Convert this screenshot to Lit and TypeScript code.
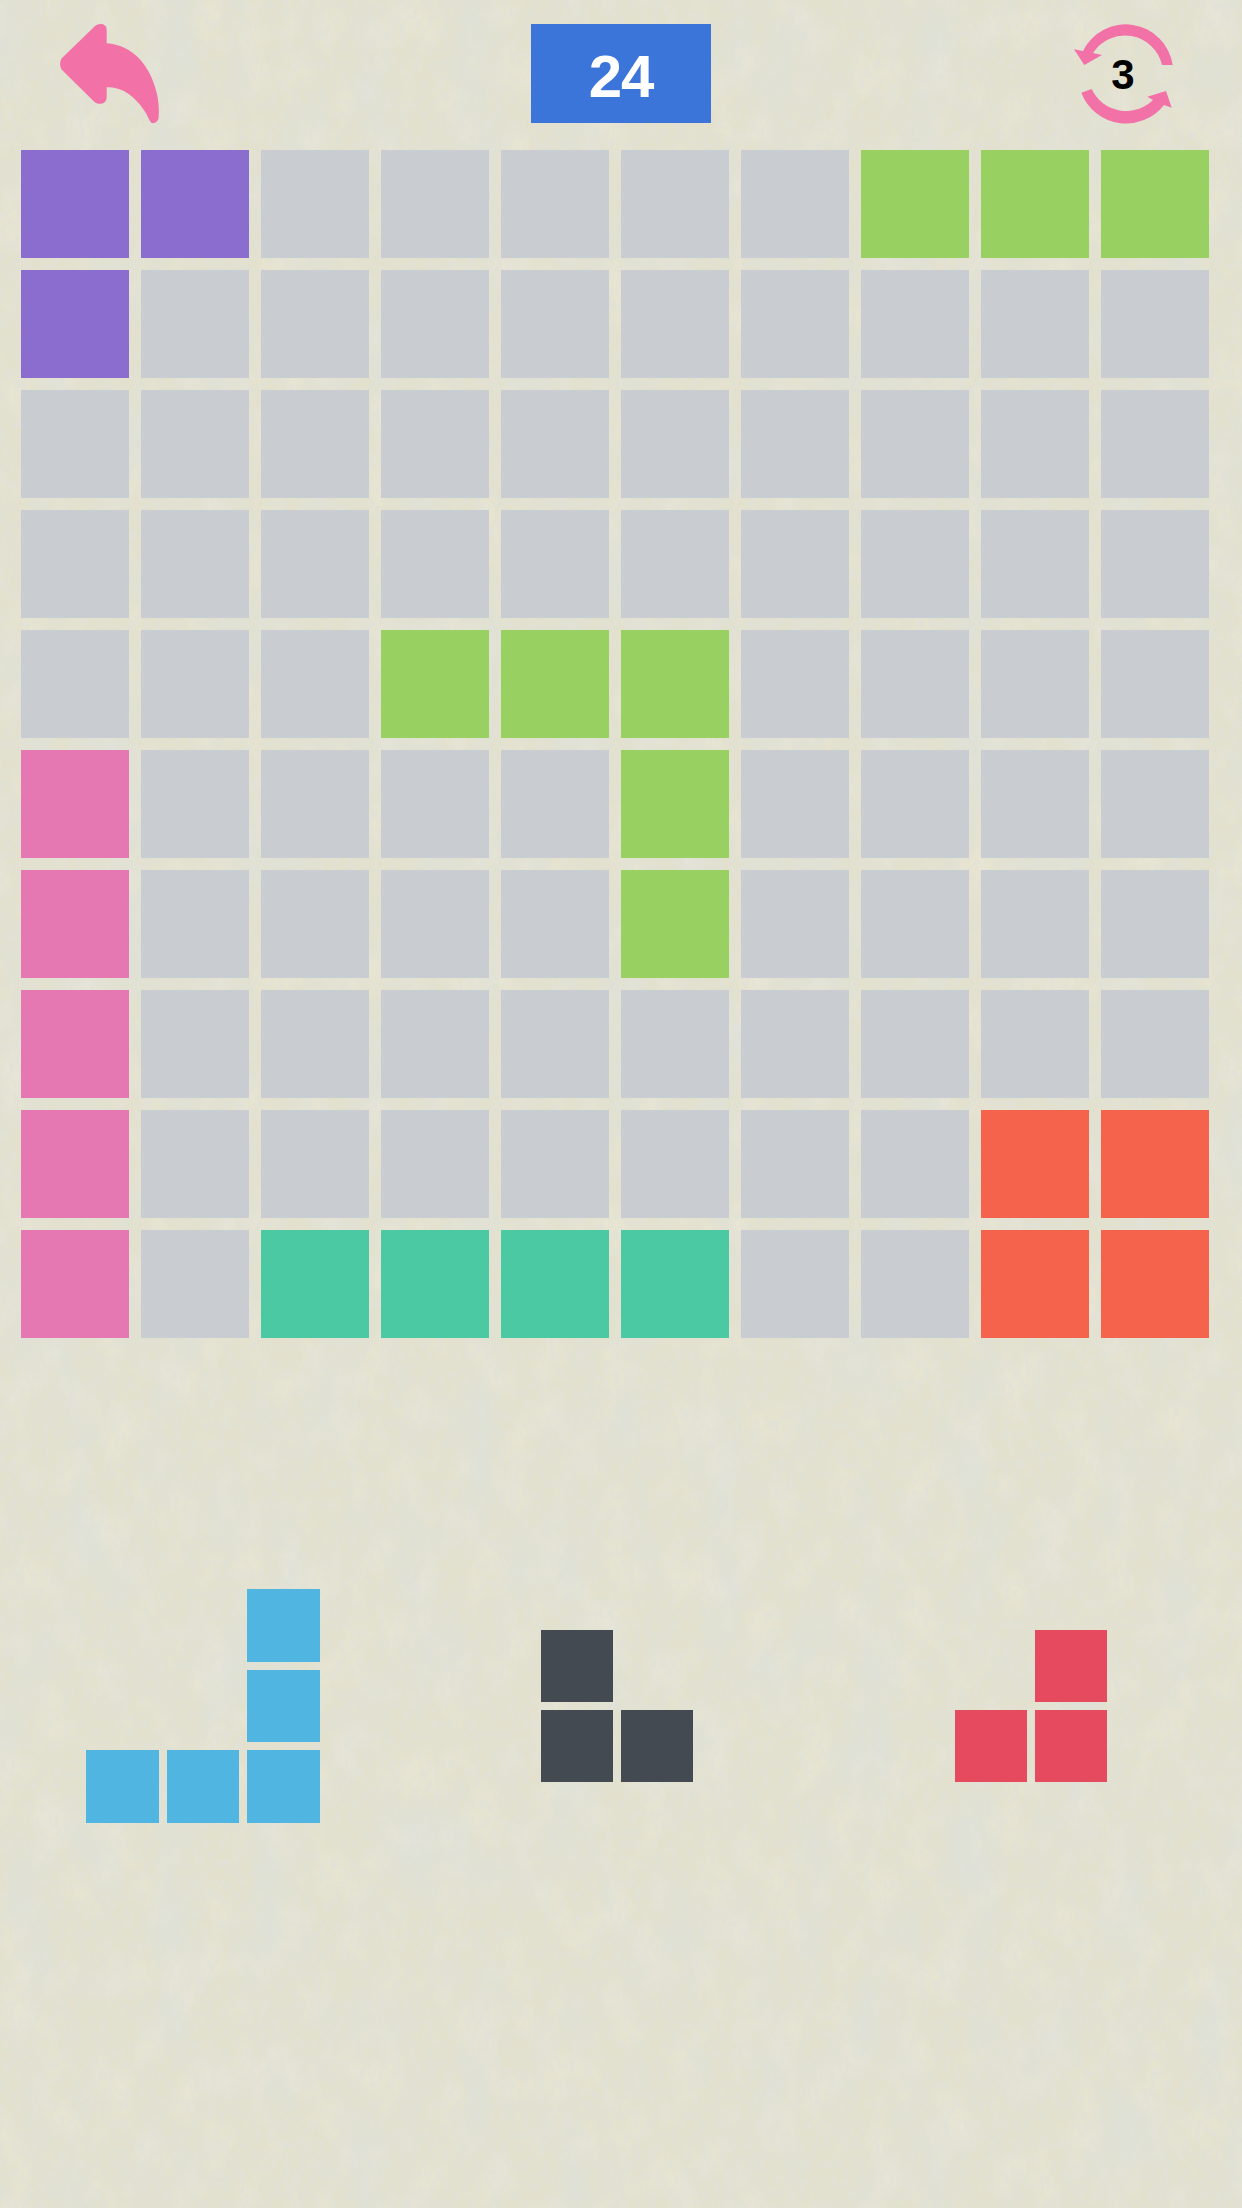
import { LitElement, html, css, svg } from "lit";
import { customElement } from "lit/decorators.js";

const C: Record<string, string> = {
  e: "#c9ccd0", p: "#8b6dcf", g: "#98d162", k: "#e577b3", t: "#4bc9a2", o: "#f5634c",
};
const BOARD = [
  "ppeeeeeggg",
  "peeeeeeeee",
  "eeeeeeeeee",
  "eeeeeeeeee",
  "eeegggeeee",
  "keeeegeeee",
  "keeeegeeee",
  "keeeeeeeee",
  "keeeeeeeoo",
  "kettttzzoo".replace(/z/g, "e"),
];
const PIECES: { color: string; rows: string[]; cls: string }[] = [
  { color: "#50b5e1", rows: ["..x", "..x", "xxx"], cls: "big" },
  { color: "#434a52", rows: ["x.", "xx"], cls: "" },
  { color: "#e54a5f", rows: [".x", "xx"], cls: "" },
];

@customElement("app-root")
export class AppRoot extends LitElement {
  static styles = css`
    :host { display: block; width: 1242px; height: 2208px; position: relative; overflow: hidden; background: #e3e1cd; }
    .paper { position: absolute; inset: 0; width: 100%; height: 100%; }
    .page { position: relative; display: flex; flex-direction: column; height: 100%; }
    .top { flex: none; height: 150px; display: grid; grid-template-columns: 1fr 180px 1fr; box-sizing: border-box; padding-top: 24px; align-items: start; }
    .back { width: 100px; height: 100px; margin-left: 60px; display: block; }
    .score { height: 99px; box-sizing: border-box; padding-top: 5px; background: #3c75d9; color: #fff; display: flex; align-items: center; justify-content: center;
      font: 700 60px "Liberation Sans", Arial, sans-serif; letter-spacing: -1px; }
    .undo { justify-self: end; position: relative; width: 100px; height: 100px; box-sizing: border-box; padding: 2px 2px 0 0; margin-right: 68px; display: flex; align-items: center; justify-content: center;
      font: 700 42px "Liberation Sans", Arial, sans-serif; color: #000; }
    .undo svg { position: absolute; inset: 0; width: 100px; height: 100px; }
    .board { flex: none; display: grid; grid-template-columns: repeat(10, 108px); grid-auto-rows: 108px; gap: 12px; padding-left: 21px; }
    .tray { flex: 1; margin-left: -4px; display: grid; grid-template-columns: repeat(3, 414px); align-items: start; justify-items: center; }
    .piece { display: grid; gap: 8px; grid-auto-rows: 72px; margin-top: 292px; }
    .piece.big { grid-auto-rows: 72.67px; margin-top: 251px; }
  `;

  render() {
    return html`
      <svg class="paper" xmlns="http://www.w3.org/2000/svg" preserveAspectRatio="none" aria-hidden="true">
        <filter id="blot" x="0" y="0" width="100%" height="100%">
          <feTurbulence type="fractalNoise" baseFrequency="0.02 0.01" numOctaves="4" seed="4" />
          <feColorMatrix values="0 0 0 0 0.70  0 0 0 0 0.76  0 0 0 0 0.78  2.6 0 0 0 -1.1" />
        </filter>
        <filter id="warm" x="0" y="0" width="100%" height="100%">
          <feTurbulence type="fractalNoise" baseFrequency="0.03 0.02" numOctaves="3" seed="21" />
          <feColorMatrix values="0 0 0 0 0.95  0 0 0 0 0.87  0 0 0 0 0.78  2.2 0 0 0 -1.05" />
        </filter>
        <filter id="fibre" x="0" y="0" width="100%" height="100%">
          <feTurbulence type="fractalNoise" baseFrequency="0.2 0.1" numOctaves="3" seed="9" />
          <feColorMatrix values="0 0 0 0 0.75  0 0 0 0 0.75  0 0 0 0 0.69  3 0 0 0 -1.3" />
        </filter>
        <rect width="100%" height="100%" filter="url(#blot)" opacity=".4" />
        <rect width="100%" height="100%" filter="url(#warm)" opacity=".3" />
        <rect width="100%" height="100%" filter="url(#fibre)" opacity=".8" />
      </svg>
      <div class="page">
        <div class="top">
          <svg class="back" viewBox="0 0 100 100">
            <path fill="#f272a8" d="M46.700 19.300 C72 21 90 40 97 70 C99 80 99 87 98.700 92.700 C98.500 98.500 92 101.500 90 97 C84 83 68 62 46.700 63.300 L46.700 73 C46.700 80.500 38 81.500 34 77.500 L2 46 C-.5 43 -.5 37 2 34 L34 3 C38 -1.500 46.700 -1 46.700 6 Z"/>
          </svg>
          <div class="score">24</div>
          <div class="undo">
            <svg viewBox="0 0 100 100" fill="#f272a8">
              ${svg`
                <path d="M98.700 41 A47.500 47.500 0 0 0 9 27 L0 25.300 L10.300 41 L28 31 L19 29 A38 38 0 0 1 88 41 Z" />
                <path d="M7.300 68.700 A48 48 0 0 0 90 81 L97.700 83.700 L92 67 L73.300 72.700 L79 76 A38 38 0 0 1 17.700 65 Z" />
              `}
            </svg>
            <span>3</span>
          </div>
        </div>
        <div class="board">
          ${BOARD.flatMap((r) => [...r]).map((c) => html`<div style="background:${C[c]}"></div>`)}
        </div>
        <div class="tray">
          ${PIECES.map((p) => html`
            <div class="piece ${p.cls}" style="grid-template-columns:repeat(${p.rows[0].length},${p.cls ? "72.67px" : "72px"})">
              ${p.rows.flatMap((r) => [...r]).map((c) => html`<div style="background:${c === "x" ? p.color : "transparent"}"></div>`)}
            </div>
          `)}
        </div>
      </div>
    `;
  }
}
